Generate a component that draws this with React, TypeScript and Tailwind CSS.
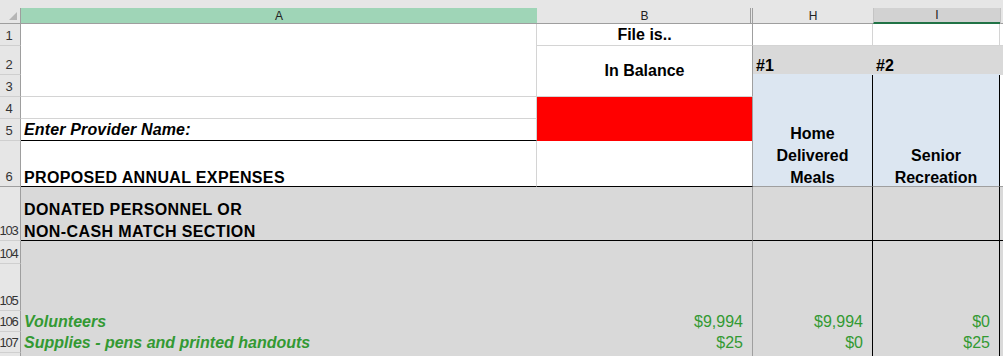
import React from "react";

// Worksheet: frozen header rows plus the donated-personnel section.
const FONT = "font-['Liberation_Sans',Arial,sans-serif]";

function RowHead({ label, row, strong }: { label: string; row: string; strong?: boolean }) {
  return (
    <div
      className={`col-start-1 ${row} flex items-end justify-center pr-[3px] pb-[3px] bg-[#e6e6e6] border-r border-r-[#9e9e9e] border-b ${
        strong ? "border-b-[#9e9e9e]" : "border-b-[#cfcfcf]"
      } text-[13px] leading-[13px] tracking-[-1.2px] text-[#333] overflow-hidden`}
    >
      {label}
    </div>
  );
}

const green = "text-[#339933]";

export default function App() {
  const lowerRows = [
    { row: "row-start-9", label: "104" },
    { row: "row-start-10", label: "105" },
    {
      row: "row-start-11",
      label: "106",
      name: "Volunteers",
      b: "$9,994",
      h: "$9,994",
      i: "$0",
    },
    {
      row: "row-start-12",
      label: "107",
      name: "Supplies - pens and printed handouts",
      b: "$25",
      h: "$0",
      i: "$25",
    },
    { row: "row-start-13", label: "" },
  ];

  return (
    <div className={`${FONT} w-[1003px] h-[356px] overflow-hidden bg-white text-black`}>
      <div className="h-[8px] bg-[#e6e6e6]" />
      <div className="grid h-[348px] grid-cols-[21px_516px_216px_120px_127px_1fr] grid-rows-[16px_22px_29px_22px_22px_22px_46px_54px_23px_47px_21px_21px_1fr]">
        {/* column headers */}
        <div className="col-start-1 row-start-1 flex items-end justify-end pr-[3px] pb-[3px] bg-[#e6e6e6] border-r border-r-[#9e9e9e] border-b border-b-[#9e9e9e]">
          <svg width="8" height="8" viewBox="0 0 8 8">
            <polygon points="8,0 8,8 0,8" fill="#b5b5b5" />
          </svg>
        </div>
        <div className="col-start-2 row-start-1 flex items-center justify-center bg-[#9fd5b7] border-b border-b-[#9e9e9e] text-[12px] text-[#222]">
          A
        </div>
        <div className="col-start-3 row-start-1 flex items-center justify-center bg-[#e6e6e6] border-r border-r-[#9e9e9e] border-b border-b-[#9e9e9e] shadow-[inset_-1px_0_0_#e6e6e6,inset_-2px_0_0_#9e9e9e] text-[12px] text-[#222]">
          B
        </div>
        <div className="col-start-4 row-start-1 flex items-center justify-center bg-[#e6e6e6] border-b border-b-[#9e9e9e] text-[12px] text-[#222]">
          H
        </div>
        <div className="col-start-5 row-start-1 flex items-center justify-center bg-[#d2d2d2] border-l border-l-[#c4c4c4] border-b-2 border-b-[#217346] text-[12px] text-[#222]">
          I
        </div>
        <div className="col-start-6 row-start-1 bg-[#e6e6e6] border-l border-l-[#c4c4c4] border-b border-b-[#9e9e9e]" />

        {/* row headers */}
        <RowHead label="1" row="row-start-2" />
        <RowHead label="2" row="row-start-3" />
        <RowHead label="3" row="row-start-4" />
        <RowHead label="4" row="row-start-5" />
        <RowHead label="5" row="row-start-6" />
        <RowHead label="6" row="row-start-7" strong />
        <RowHead label="103" row="row-start-8" />

        {/* rows 1-3 */}
        <div className="col-start-2 row-start-2 row-span-3 bg-white border-r border-r-[#d4d4d4] border-b border-b-[#d4d4d4]" />
        <div className="col-start-3 row-start-2 flex items-center justify-center bg-white border-r border-r-[#9f9f9f] border-b border-b-[#d4d4d4] text-[16px] font-bold leading-[20px]">
          File is..
        </div>
        <div className="col-start-3 row-start-3 row-span-2 flex items-center justify-center bg-white border-r border-r-[#9f9f9f] border-b border-b-[#d4d4d4] text-[16px] font-bold leading-[20px]">
          In Balance
        </div>
        <div className="col-start-4 row-start-2 bg-white border-r border-r-[#d4d4d4] border-b border-b-[#d4d4d4]" />
        <div className="col-start-5 row-start-2 bg-white border-r border-r-[#d4d4d4] border-b border-b-[#d4d4d4]" />
        <div className="col-start-6 row-start-2 bg-white border-b border-b-[#d4d4d4]" />

        <div className="col-start-4 row-start-3 flex items-end pl-[3px] bg-[#d9d9d9] border-b border-b-[#dce6f1] text-[16px] font-bold leading-[22px]">
          <span className="mb-[-3px]">#1</span>
        </div>
        <div className="col-start-5 row-start-3 flex items-end pl-[3px] bg-[#d9d9d9] border-b border-b-[#dce6f1] text-[16px] font-bold leading-[22px]">
          <span className="mb-[-3px]">#2</span>
        </div>
        <div className="col-start-6 row-start-3 bg-[#d9d9d9]" />

        {/* rows 4-6 */}
        <div className="col-start-2 row-start-5 bg-white border-r border-r-[#d4d4d4] border-b border-b-[#d4d4d4]" />
        <div className="col-start-2 row-start-6 flex items-center pl-[3px] bg-white border-r border-r-[#d4d4d4] border-b border-b-black text-[16px] font-bold italic leading-[20px] tracking-[0.15px]">
          Enter Provider Name:
        </div>
        <div className="col-start-3 row-start-5 row-span-2 bg-[#ff0000] border-r border-r-[#9f9f9f]" />
        <div className="col-start-2 row-start-7 flex items-end pl-[3px] bg-white border-r border-r-[#d4d4d4] border-b border-b-black text-[16px] font-bold leading-[22px] tracking-[0.35px]">
          <span className="mb-[-3px]">PROPOSED ANNUAL EXPENSES</span>
        </div>
        <div className="col-start-3 row-start-7 bg-white border-r border-r-[#9f9f9f] border-b border-b-black" />

        <div className="col-start-4 row-start-4 row-span-4 flex items-end justify-center bg-[#dce6f1] border-r border-r-black border-b border-b-[#9f9f9f] text-[16px] font-bold leading-[22px] text-center">
          <span className="mb-[-3px]">
            Home
            <br />
            Delivered
            <br />
            Meals
          </span>
        </div>
        <div className="col-start-5 row-start-4 row-span-4 flex items-end justify-center bg-[#dce6f1] border-r border-r-black border-b border-b-[#9f9f9f] text-[16px] font-bold leading-[22px] text-center">
          <span className="mb-[-3px]">
            Senior
            <br />
            Recreation
          </span>
        </div>
        <div className="col-start-6 row-start-4 row-span-4 bg-white border-b border-b-[#9f9f9f]" />

        {/* row 103 */}
        <div className="col-start-2 row-start-8 flex items-end pl-[3px] bg-[#d9d9d9] border-b border-b-black text-[16px] font-bold leading-[22px] tracking-[0.4px]">
          <span className="mb-[-3px]">
            DONATED PERSONNEL OR
            <br />
            NON-CASH MATCH SECTION
          </span>
        </div>
        <div className="col-start-3 row-start-8 bg-[#d9d9d9] border-r border-r-[#9f9f9f] border-b border-b-black" />
        <div className="col-start-4 row-start-8 bg-[#d9d9d9] border-r border-r-black border-b border-b-black" />
        <div className="col-start-5 row-start-8 bg-[#d9d9d9] border-r border-r-black border-b border-b-black" />
        <div className="col-start-6 row-start-8 bg-[#d9d9d9] border-b border-b-black" />

        {/* rows 104-108 */}
        {lowerRows.map((r) => (
          <React.Fragment key={r.label || "last"}>
            <RowHead label={r.label} row={r.row} />
            <div className={`col-start-2 ${r.row} flex items-center pl-[3px] pt-[1px] bg-[#d9d9d9] ${green} text-[16px] font-bold italic leading-[20px] whitespace-nowrap`}>
              {r.name}
            </div>
            <div className={`col-start-3 ${r.row} flex items-center justify-end pr-[9px] pt-[1px] bg-[#d9d9d9] border-r border-r-[#9f9f9f] ${green} text-[16px] leading-[20px]`}>
              {r.b}
            </div>
            <div className={`col-start-4 ${r.row} flex items-center justify-end pr-[9px] pt-[1px] bg-[#d9d9d9] border-r border-r-black ${green} text-[16px] leading-[20px]`}>
              {r.h}
            </div>
            <div className={`col-start-5 ${r.row} flex items-center justify-end pr-[9px] pt-[1px] bg-[#d9d9d9] border-r border-r-black ${green} text-[16px] leading-[20px]`}>
              {r.i}
            </div>
            <div className={`col-start-6 ${r.row} bg-[#d9d9d9]`} />
          </React.Fragment>
        ))}
      </div>
    </div>
  );
}
